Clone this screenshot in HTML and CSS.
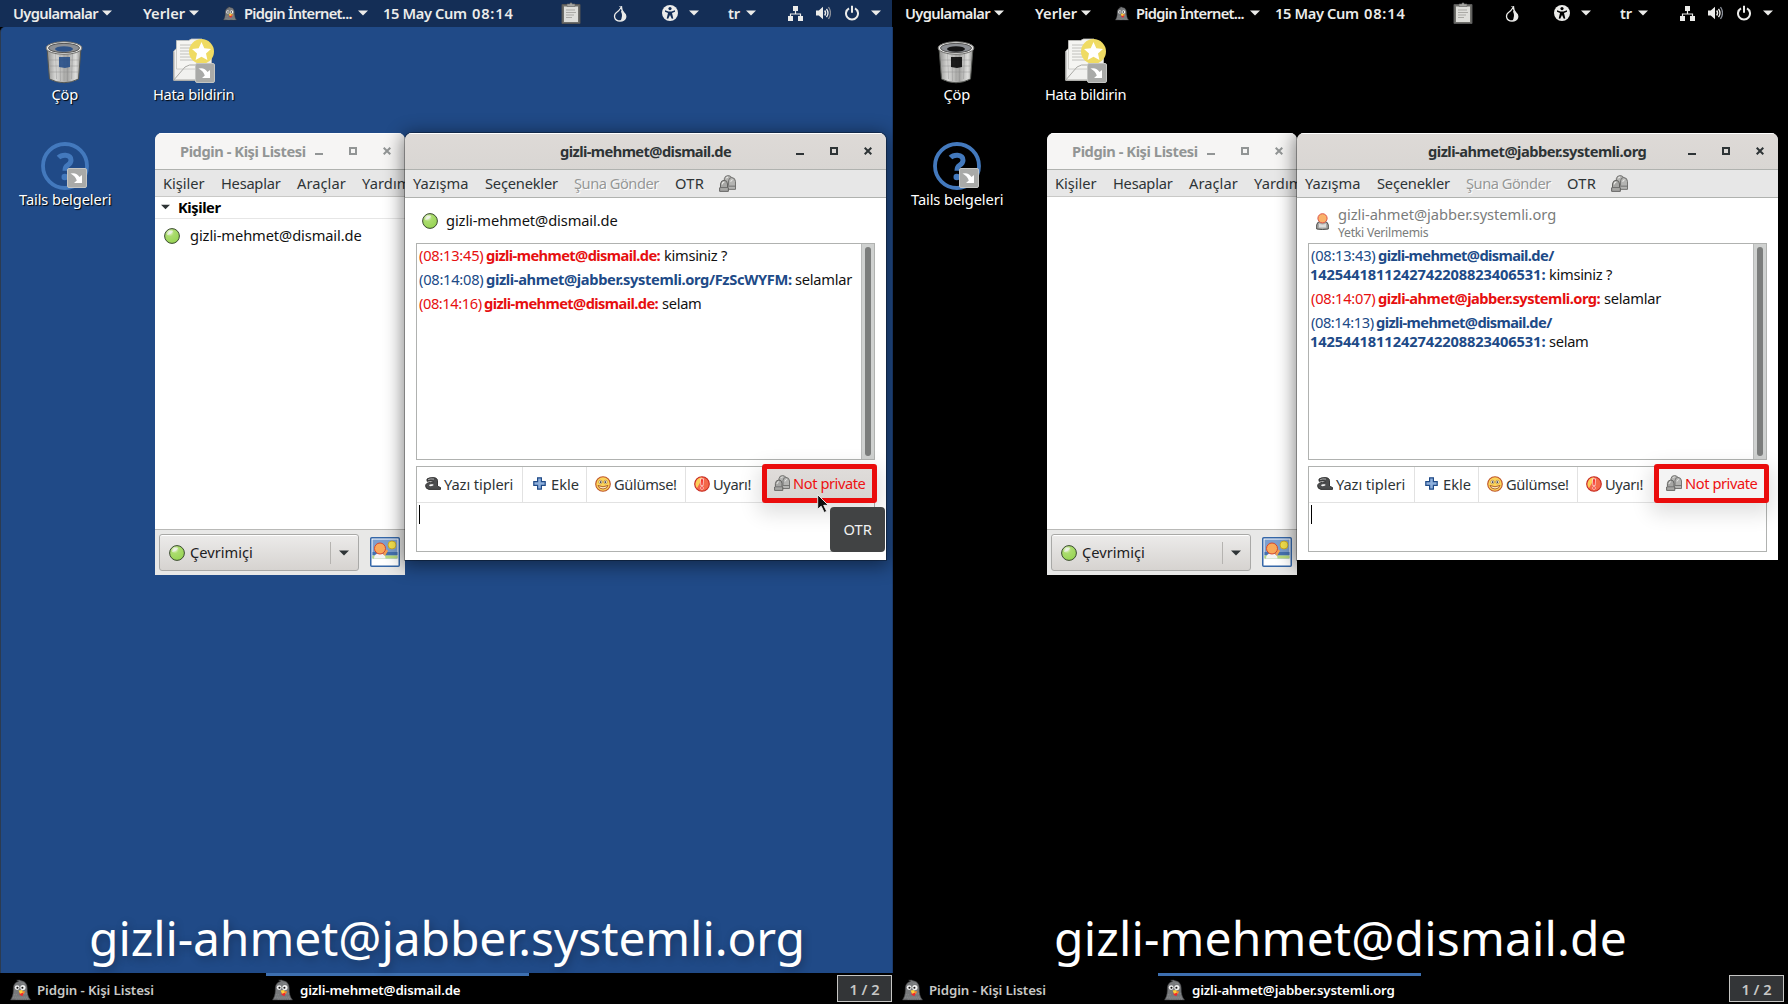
FILE: index.html
```html
<!DOCTYPE html>
<html lang="tr">
<head>
<meta charset="utf-8">
<title>Pidgin OTR</title>
<link rel="stylesheet" href="styles.css">
</head>
<body>
<svg class="defs" width="0" height="0">
  <defs>
    <radialGradient id="ball" cx=".35" cy=".25" r=".8"><stop offset="0" stop-color="#f4fbe9"/><stop offset=".35" stop-color="#abdc6e"/><stop offset="1" stop-color="#96d452"/></radialGradient>
    <linearGradient id="steel"><stop offset="0" stop-color="#8e8e8c"/><stop offset=".25" stop-color="#d8d8d6"/><stop offset=".6" stop-color="#a5a5a3"/><stop offset=".85" stop-color="#dededc"/><stop offset="1" stop-color="#8a8a88"/></linearGradient>
    <symbol id="i-ball" viewBox="0 0 16 16"><circle cx="8" cy="8" r="7.4" fill="url(#ball)" stroke="#3c4a33" stroke-width="1"/><path d="M3 7a5 5 0 0 1 6-4Q8 6 3 7z" fill="#eee" opacity=".8"/></symbol>
    <symbol id="i-pidgin" viewBox="0 0 22 22"><path d="M9 2l-2-1.200L10 .6l2 .8c4 .6 6 3.600 6 7.600 0 5 .5 9 3.500 12.400H.6C3.500 17 3.500 13 3.500 9 3.500 5.500 5.500 2.500 9 2z" fill="#77797b" stroke="#3b3b3d" stroke-width=".6"/><path d="M4 16h4M15 15h3M3 18.500h15M12 4h4M6 20.500h13" stroke="#939597" stroke-width="1" stroke-dasharray="1 1"/><circle cx="7.500" cy="8.500" r="2.500" fill="#f2f2f2"/><circle cx="13.500" cy="8.500" r="2.700" fill="#f2f2f2"/><circle cx="7.800" cy="8.700" r="1.100" fill="#111"/><circle cx="13" cy="8.700" r="1.100" fill="#111"/><path d="M10 12l4.500 1.500-1.500 4-3-1.500z" fill="#f0282d"/><path d="M9 11.500l4-.5.5 3-3 1z" fill="#fbd23a"/><path d="M13 12l3 .5-2 3z" fill="#fb8a2a"/></symbol>
    <symbol id="i-down" viewBox="0 0 10 6"><path d="M0 .5h10L5 5.500z" fill="currentColor"/></symbol>
    <symbol id="i-otr" viewBox="0 0 16 16"><path d="M5 9V3.500Q5.500.6 8.500.6q2.500 0 3.300 1.700 3.600.3 3.700 3.700v7.500H8z" fill="#b4b4b2" stroke="#6b6b69" stroke-width=".9"/><path d="M.6 15.400v-3.400l.8-.6V8.500Q1.800 5 4.800 5 8 5 8 8.500v3l.8.5v3.400z" fill="#a6a6a4" stroke="#5d5d5b" stroke-width=".9"/><path d="M1 11.800h7.600M8.500 10.500h7M9 10V5.500Q9.300 2.500 11.800 2.300" fill="none" stroke="#666664" stroke-width=".8"/><path d="M3 9q.1-2.300 2-2.300M11 6.500q.3-2 2-2M6.800 3q.6-1 1.800-1" stroke="#e6e6e4" fill="none"/></symbol>
    <symbol id="i-font" viewBox="0 0 16 13"><path d="M2 4.300V2Q4 .6 8 .6q4.300 0 4.500 3v5.600l3 1.300v1.900H4Q.6 11.800.6 8.800q.2-3.200 5-3.400h3q0-1.700-3-1.500-2 .1-3.600.4z" fill="#4c4d4e" stroke="#2a2a2a" stroke-width=".9"/><path d="M8.300 7.200H5.800Q3.700 7.500 4.200 8.800q1 .9 4.100-.2z" fill="#f5f5f5"/><path d="M3.200 2.600Q5.500 1.500 9 2.100" stroke="#aaa" fill="none"/></symbol>
    <symbol id="i-plus" viewBox="0 0 13 13"><path d="M4.600.8h3.800v3.800h3.800v3.800H8.400v3.800H4.600V8.400H.8V4.600h3.800z" fill="#8fb0dc" stroke="#1f4a87" stroke-width="1.200"/></symbol>
    <symbol id="i-smile" viewBox="0 0 16 16"><circle cx="8" cy="8" r="7.300" fill="#fbd35a" stroke="#c0562a" stroke-width="1.100"/><circle cx="5.500" cy="6" r="1.700" fill="#fff" stroke="#8a5a1a" stroke-width=".5"/><circle cx="10.500" cy="6" r="1.700" fill="#fff" stroke="#8a5a1a" stroke-width=".5"/><path d="M5.700 5.200v1.800M10.300 5.200v1.800" stroke="#222" stroke-width="1"/><path d="M3 9.500q5 2.500 10 0-1 3.500-5 3.500t-5-3.500z" fill="#fff0c0" stroke="#a0451c" stroke-width=".8"/></symbol>
    <symbol id="i-warn" viewBox="0 0 16 16"><circle cx="8" cy="8" r="7.300" fill="#f4694a" stroke="#c62a22" stroke-width="1.100"/><path d="M8 1.500A6.500 6.500 0 0 0 3 12Q6 8 8 1.500z" fill="#fbcf5a"/><path d="M6.500 2.800h3L9 9.800H7z" fill="#f5251d" stroke="#fff" stroke-width=".7"/><circle cx="8" cy="12" r="1.400" fill="#f5251d" stroke="#fff" stroke-width=".6"/></symbol>
    <symbol id="i-person" viewBox="0 0 13 17"><path d="M.7 16V12Q.9 9 4 8.500h5q3 .5 3.300 3.500v4q-6 1-11.600 0z" fill="#a9a9a7" stroke="#4a4a48"/><path d="M3 10.500q3.500 2 7 0v4H3z" fill="#dcdcda"/><circle cx="6.500" cy="5.300" r="4.600" fill="#f9b26a" stroke="#de5548"/></symbol>
    <symbol id="i-trash" viewBox="0 0 38 44"><path d="M2 8l2.500 31Q19 46.500 33.500 39L36 8z" fill="url(#steel)" stroke="#555753"/><path d="M10.500 14l1 25M15 15l.5 26M19 15v26M23 15l-.5 26M27.500 14l-1 25M4 20h30M4.500 26h29M5 32h28" stroke="#888" stroke-width=".4"/><path class="glass" d="M14 17h11v10l-5 1-6-1z"/><ellipse cx="19" cy="8" rx="18" ry="6.300" fill="#e9e9e7" stroke="#6b6b69"/><ellipse cx="19" cy="8" rx="15.500" ry="4.600" fill="#8d9095" stroke="#555"/><ellipse class="glass" cx="19" cy="9" rx="9" ry="2.800"/></symbol>
    <symbol id="i-link" viewBox="0 0 20 20"><rect x=".5" y=".5" width="19" height="19" rx="1.500" fill="#a9aaa8" stroke="#c4c5c3"/><path d="M3.500 5.500q6-1.500 9 3.500l2.500-2V15H7l2.800-2.500Q8.500 8 3.500 5.500z" fill="#fff"/></symbol>
    <symbol id="i-mail" viewBox="0 0 43 45"><path d="M.8 13L5 9h30l3.500 4v29.500H.8z" fill="#f1f1ef" stroke="#b5b5b1"/><path d="M3.500 31V2.500h12l3-1.500H29v30z" fill="#f5f5f2" stroke="#c4c4c0" stroke-width=".8"/><path d="M7 7h12M7 10h10M7 13h10M7 16h10M7 19h12M7 22h15" stroke="#c0c0bc"/><path d="M.8 42L12 29q4-3 10-2l4 2M.8 14v28h25" fill="none" stroke="#a9a9a5"/><circle cx="28.500" cy="13.500" r="12.500" fill="#efdb63"/><path d="M28.500 4l2.800 6.200 6.700.7-5 4.600 1.400 6.600-5.900-3.400-5.900 3.400 1.400-6.600-5-4.600 6.700-.7z" fill="#fff"/></symbol>
    <symbol id="i-help" viewBox="0 0 48 48"><circle cx="24" cy="24" r="22" fill="none" stroke="#4379bd" stroke-width="3.800"/><path d="M17.500 15.500q2.500-2.500 7-2.300 5.500.4 5.500 5 0 3-3.500 5.200-2.500 1.600-2.500 5.300" fill="none" stroke="#4379bd" stroke-width="5"/><circle cx="23.800" cy="35" r="3.300" fill="#4379bd"/></symbol>
    <symbol id="i-clip" viewBox="0 0 20 22"><path d="M1 2.500h18v19H1z" fill="#6f6f6b" stroke="#555"/><path d="M3 4.500h14v15.500H3z" fill="#dededa"/><path d="M6 4.500V2h2.500Q10-.5 11.500 2H14v2.500z" fill="#a5a5a1" stroke="#666" stroke-width=".6"/><path d="M5 8h9M5 10.500h10M5 13h8M5 15.500h6" stroke="#aaa9a5"/></symbol>
    <symbol id="i-onion" viewBox="0 0 14 16"><path d="M8.500 1Q6 5 3.200 6.800C.5 9 .8 15 7 15s7-5.500 4-8Q8.500 5 8.500 1z" fill="none" stroke="currentColor" stroke-width="1.300"/><path d="M8 5.500Q10.300 10 7.300 15c6 0 6.500-5.500 3.700-8Q9 5.500 8 4.500z" fill="currentColor"/><path d="M6.500.5l2.500 1" stroke="currentColor"/></symbol>
    <symbol id="i-access" viewBox="0 0 16 16"><circle cx="8" cy="8" r="8" fill="currentColor"/><g class="cut"><circle cx="8" cy="3.600" r="1.600"/><path d="M3 5.300l3.500 1.200h3L13 5.300v1.500L10 8l1.300 5.500-1.500.3L8 10l-1.800 3.800-1.500-.3L6 8 3 6.800z"/></g></symbol>
    <symbol id="i-net" viewBox="0 0 15 15"><path d="M5 0h5v5H5zM0 10h5v5H0zM10 10h5v5h-5z" fill="currentColor"/><path d="M7.500 5v3M2.500 11V8h10v3" fill="none" stroke="currentColor" stroke-width="1.200"/></symbol>
    <symbol id="i-vol" viewBox="0 0 15 14"><path d="M0 4.500h2.800L7 .8v12.400L2.800 9.500H0z" fill="currentColor"/><path d="M8.700 4.500q1.800 2.500 0 5M10.500 2.800q3 4.200 0 8.400" fill="none" stroke="currentColor" stroke-width="1.400"/><path d="M12.500 1q4 6 0 12" fill="none" stroke="#8a8f99" stroke-width="1.300"/></symbol>
    <symbol id="i-power" viewBox="0 0 14 16"><path d="M4 3.300a6 6 0 1 0 6 0" fill="none" stroke="currentColor" stroke-width="2"/><path d="M7 .8v7" stroke="currentColor" stroke-width="2"/></symbol>
    <symbol id="i-min" viewBox="0 0 8 8"><path d="M0 6h8v2H0z" fill="currentColor"/></symbol>
    <symbol id="i-max" viewBox="0 0 8 8"><path d="M1 1h6v6H1z" fill="none" stroke="currentColor" stroke-width="2"/></symbol>
    <symbol id="i-close" viewBox="0 0 8 8"><path d="M.7.7l6.600 6.600M7.300.7L.7 7.300" stroke="currentColor" stroke-width="2"/></symbol>
    <symbol id="i-avatar" viewBox="0 0 30 30"><rect x=".75" y=".75" width="28.500" height="28.500" rx="1" fill="#fff" stroke="#3567a8" stroke-width="1.500"/><path d="M2.500 2.500h25v19h-25z" fill="#7c9fcf"/><path d="M2.500 15h25v3h-25z" fill="#4572b0"/><path d="M2.500 18.500h25v3h-25z" fill="#b9dc7c"/><circle cx="22" cy="8" r="4" fill="#f3e04c" stroke="#c9a92c"/><path d="M4 21.500q0-5 5.500-5.500 6 .5 6 5.500z" fill="#f4f4f4"/><path d="M14 18l3-5" stroke="#f7a050" stroke-width="2.500"/><circle cx="10" cy="11.500" r="5.500" fill="#f9a95a" stroke="#d9482f"/></symbol>
    <symbol id="i-cursor" viewBox="0 0 14 20"><path d="M.7.7v14.500l3.500-3 3 6.300 2.500-1.200-3-6h4.600z" fill="#0c0c0c" stroke="#f4f4f4" stroke-width=".9"/></symbol>
  </defs>
</svg>

<section class="desktop blue">
  <header class="topbar">
    <span class="t uyg">Uygulamalar</span><svg class="down"><use href="#i-down"/></svg>
    <span class="t yer">Yerler</span><svg class="down"><use href="#i-down"/></svg>
    <svg class="bird"><use href="#i-pidgin"/></svg><span class="t app">Pidgin İnternet...</span><svg class="down"><use href="#i-down"/></svg>
    <span class="t date">15 May Cum</span><span class="t time">08:14</span>
    <svg class="clip"><use href="#i-clip"/></svg><svg class="onion"><use href="#i-onion"/></svg>
    <svg class="access"><use href="#i-access"/></svg><svg class="down d-acc"><use href="#i-down"/></svg>
    <span class="t lang">tr</span><svg class="down"><use href="#i-down"/></svg>
    <svg class="net"><use href="#i-net"/></svg><svg class="vol"><use href="#i-vol"/></svg><svg class="power"><use href="#i-power"/></svg><svg class="down d-pow"><use href="#i-down"/></svg>
  </header>
  <main class="space">
    <div class="launcher trash"><svg><use href="#i-trash"/></svg><span class="t cop">Çöp</span></div>
    <div class="launcher report"><svg><use href="#i-mail"/></svg><svg class="link"><use href="#i-link"/></svg><span class="t hata">Hata bildirin</span></div>
    <div class="launcher docs"><svg><use href="#i-help"/></svg><svg class="link"><use href="#i-link"/></svg><span class="t tails">Tails belgeleri</span></div>

    <article class="window buddies">
      <div class="titlebar"><span class="t b-title">Pidgin - Kişi Listesi</span><svg><use href="#i-min"/></svg><svg><use href="#i-max"/></svg><svg><use href="#i-close"/></svg></div>
      <nav class="menubar"><span class="t m-kis">Kişiler</span><span class="t m-hes">Hesaplar</span><span class="t m-ara">Araçlar</span><span class="t m-yar">Yardım</span></nav>
      <div class="list">
        <div class="group"><svg class="down"><use href="#i-down"/></svg><span class="t g-kis">Kişiler</span></div>
        <div class="buddy"><svg class="ball"><use href="#i-ball"/></svg><span class="t who">gizli-mehmet@dismail.de</span></div>
      </div>
      <footer class="status"><div class="combo"><svg class="ball"><use href="#i-ball"/></svg><span class="t cev">Çevrimiçi</span><i></i><svg class="down"><use href="#i-down"/></svg></div><svg class="avatar"><use href="#i-avatar"/></svg></footer>
    </article>

    <article class="window chat">
      <div class="titlebar"><span class="t c-meh">gizli-mehmet@dismail.de</span><svg><use href="#i-min"/></svg><svg><use href="#i-max"/></svg><svg><use href="#i-close"/></svg></div>
      <nav class="menubar"><span class="t m-yaz">Yazışma</span><span class="t m-sec">Seçenekler</span><span class="t m-sun">Şuna Gönder</span><span class="t m-otr">OTR</span><svg class="otr"><use href="#i-otr"/></svg></nav>
      <div class="contact"><svg class="ball"><use href="#i-ball"/></svg><span class="t who">gizli-mehmet@dismail.de</span></div>
      <div class="log">
        <div class="lines">
          <p class="red"><span class="t ts">(08:13:45)</span><b class="t n-meh">gizli-mehmet@dismail.de:</b><span class="t x-kim">kimsiniz ?</span></p>
          <p class="navy"><span class="t ts">(08:14:08)</span><b class="t n-ahf">gizli-ahmet@jabber.systemli.org/FzScWYFM:</b><span class="t x-lar">selamlar</span></p>
          <p class="red"><span class="t ts2">(08:14:16)</span><b class="t n-meh">gizli-mehmet@dismail.de:</b><span class="t x-sel">selam</span></p>
        </div>
        <div class="scroll"><i></i></div>
      </div>
      <div class="editor">
        <div class="tools">
          <span class="tool k1"><svg class="font"><use href="#i-font"/></svg><span class="t yt">Yazı tipleri</span></span>
          <span class="tool k2"><svg class="plus"><use href="#i-plus"/></svg><span class="t ek">Ekle</span></span>
          <span class="tool k3"><svg><use href="#i-smile"/></svg><span class="t gu">Gülümse!</span></span>
          <span class="tool k4"><svg><use href="#i-warn"/></svg><span class="t uy">Uyarı!</span></span>
          <span class="tool private hover"><svg><use href="#i-otr"/></svg><span class="t np">Not private</span></span>
        </div>
        <div class="input"><i class="caret"></i></div>
      </div>
    </article>
    <div class="tooltip"><span class="t tip">OTR</span></div>
    <svg class="cursor"><use href="#i-cursor"/></svg>
    <div class="caption"><span class="t cap-a">gizli-ahmet@jabber.systemli.org</span></div>
  </main>
  <footer class="taskbar">
    <div class="task"><svg><use href="#i-pidgin"/></svg><span class="t k-pid">Pidgin - Kişi Listesi</span></div>
    <div class="task active"><svg><use href="#i-pidgin"/></svg><span class="t k-meh">gizli-mehmet@dismail.de</span></div>
    <div class="pager"><span>1 / 2</span></div>
  </footer>
</section>

<section class="desktop black">
  <header class="topbar">
    <span class="t uyg">Uygulamalar</span><svg class="down"><use href="#i-down"/></svg>
    <span class="t yer">Yerler</span><svg class="down"><use href="#i-down"/></svg>
    <svg class="bird"><use href="#i-pidgin"/></svg><span class="t app">Pidgin İnternet...</span><svg class="down"><use href="#i-down"/></svg>
    <span class="t date">15 May Cum</span><span class="t time">08:14</span>
    <svg class="clip"><use href="#i-clip"/></svg><svg class="onion"><use href="#i-onion"/></svg>
    <svg class="access"><use href="#i-access"/></svg><svg class="down d-acc"><use href="#i-down"/></svg>
    <span class="t lang">tr</span><svg class="down"><use href="#i-down"/></svg>
    <svg class="net"><use href="#i-net"/></svg><svg class="vol"><use href="#i-vol"/></svg><svg class="power"><use href="#i-power"/></svg><svg class="down d-pow"><use href="#i-down"/></svg>
  </header>
  <main class="space">
    <div class="launcher trash"><svg><use href="#i-trash"/></svg><span class="t cop">Çöp</span></div>
    <div class="launcher report"><svg><use href="#i-mail"/></svg><svg class="link"><use href="#i-link"/></svg><span class="t hata">Hata bildirin</span></div>
    <div class="launcher docs"><svg><use href="#i-help"/></svg><svg class="link"><use href="#i-link"/></svg><span class="t tails">Tails belgeleri</span></div>

    <article class="window buddies">
      <div class="titlebar"><span class="t b-title">Pidgin - Kişi Listesi</span><svg><use href="#i-min"/></svg><svg><use href="#i-max"/></svg><svg><use href="#i-close"/></svg></div>
      <nav class="menubar"><span class="t m-kis">Kişiler</span><span class="t m-hes">Hesaplar</span><span class="t m-ara">Araçlar</span><span class="t m-yar">Yardım</span></nav>
      <div class="list"></div>
      <footer class="status"><div class="combo"><svg class="ball"><use href="#i-ball"/></svg><span class="t cev">Çevrimiçi</span><i></i><svg class="down"><use href="#i-down"/></svg></div><svg class="avatar"><use href="#i-avatar"/></svg></footer>
    </article>

    <article class="window chat">
      <div class="titlebar"><span class="t c-ahm">gizli-ahmet@jabber.systemli.org</span><svg><use href="#i-min"/></svg><svg><use href="#i-max"/></svg><svg><use href="#i-close"/></svg></div>
      <nav class="menubar"><span class="t m-yaz">Yazışma</span><span class="t m-sec">Seçenekler</span><span class="t m-sun">Şuna Gönder</span><span class="t m-otr">OTR</span><svg class="otr"><use href="#i-otr"/></svg></nav>
      <div class="contact unauth"><svg class="person"><use href="#i-person"/></svg><div><span class="t w-ahm">gizli-ahmet@jabber.systemli.org</span><span class="t w-yet">Yetki Verilmemis</span></div></div>
      <div class="log">
        <div class="lines">
          <p class="navy"><span class="t ts">(08:13:43)</span><b class="t n-mes">gizli-mehmet@dismail.de/</b></p>
          <p class="navy cont"><b class="t n-num">1425441811242742208823406531:</b><span class="t x-kim">kimsiniz ?</span></p>
          <p class="red"><span class="t ts">(08:14:07)</span><b class="t n-ahm">gizli-ahmet@jabber.systemli.org:</b><span class="t x-lar">selamlar</span></p>
          <p class="navy"><span class="t ts2">(08:14:13)</span><b class="t n-mes">gizli-mehmet@dismail.de/</b></p>
          <p class="navy cont"><b class="t n-num">1425441811242742208823406531:</b><span class="t x-sel">selam</span></p>
        </div>
        <div class="scroll"><i></i></div>
      </div>
      <div class="editor">
        <div class="tools">
          <span class="tool k1"><svg class="font"><use href="#i-font"/></svg><span class="t yt">Yazı tipleri</span></span>
          <span class="tool k2"><svg class="plus"><use href="#i-plus"/></svg><span class="t ek">Ekle</span></span>
          <span class="tool k3"><svg><use href="#i-smile"/></svg><span class="t gu">Gülümse!</span></span>
          <span class="tool k4"><svg><use href="#i-warn"/></svg><span class="t uy">Uyarı!</span></span>
          <span class="tool private"><svg><use href="#i-otr"/></svg><span class="t np">Not private</span></span>
        </div>
        <div class="input"><i class="caret"></i></div>
      </div>
    </article>
    <div class="caption"><span class="t cap-m">gizli-mehmet@dismail.de</span></div>
  </main>
  <footer class="taskbar">
    <div class="task"><svg><use href="#i-pidgin"/></svg><span class="t k-pid">Pidgin - Kişi Listesi</span></div>
    <div class="task active"><svg><use href="#i-pidgin"/></svg><span class="t k-ahm">gizli-ahmet@jabber.systemli.org</span></div>
    <div class="pager"><span>1 / 2</span></div>
  </footer>
</section>
</body>
</html>
```

FILE: styles.css
```css
* { box-sizing: border-box; }
body { margin: 0; width: 1788px; height: 1004px; overflow: hidden; display: flex; background: #000; font: 14.67px/20px "Noto Sans", "Open Sans", sans-serif; color: #2e3436; }
.defs { position: absolute; }
svg { display: block; flex: none; }
p { margin: 0; }
.t { display: block; flex: none; white-space: nowrap; padding-left: 1px; }

.desktop { flex: none; width: 892px; height: 1004px; display: flex; flex-direction: column; }
.desktop.black { width: 896px; }
.blue { --desk: #204a87; --bar: #142e56; position: relative; z-index: 1; }
.black { --desk: #000; --bar: #000; }

/* top bar */
.topbar { height: 27px; flex: none; display: flex; align-items: center; background: var(--bar); color: #ececea; font-weight: 600; padding-left: 12px; }
.topbar .t { padding-bottom: 2px; }
.down { width: 10px; height: 6px; }
.topbar .down { margin-bottom: 1px; }
.uyg { width: 86px; margin-right: 4px; letter-spacing: -.64px; }
.yer { width: 43px; margin: 0 4px 0 30px; letter-spacing: .02px; }
.bird { width: 14px; height: 15px; margin: 0 6px 0 24px; }
.app { width: 109px; margin-right: 6px; letter-spacing: -.7px; }
.date { width: 84px; margin-left: 14px; letter-spacing: -.37px; }
.time { width: 42px; margin-left: 5px; letter-spacing: .8px; }
.clip { width: 20px; height: 22px; margin: 0 32px 2px 48px; }
.onion { width: 14px; height: 16px; }
.access { width: 16px; height: 16px; margin-left: 35px; margin-bottom: 1px; }
.cut { fill: var(--bar); }
.d-acc { margin-left: 11px; }
.lang { width: 12px; margin: 0 7px 0 28px; letter-spacing: -.2px; }
.net { width: 15px; height: 15px; margin-left: 32px; }
.vol { width: 15px; height: 14px; margin-left: 13px; margin-bottom: 1px; }
.power { width: 14px; height: 16px; margin-left: 14px; margin-bottom: 1px; }
.d-pow { margin-left: 12px; }

/* desktop surface */
.space { flex: 1; position: relative; background: var(--desk); }
.blue .space { border-left: 1px solid #2c3b50; border-radius: 5px 0 0 0; box-shadow: 1px 0 #1b3b6d; }
.blue .space > * { margin-left: -1px; }
.glass { fill: var(--desk); opacity: .85; }
.launcher { position: absolute; display: flex; flex-direction: column; align-items: center; color: #fff; text-shadow: 1px 1px 1px #000; }
.launcher .link { position: absolute; width: 20px; height: 20px; }
.trash { left: 45px; top: 13px; }
.trash svg { width: 38px; height: 44px; }
.report { left: 152px; top: 11px; }
.report svg { width: 43px; height: 45px; margin: 0 0 1px 1px; }
.report .link { left: 43px; top: 25px; margin: 0; }
.docs { left: 18px; top: 115px; }
.docs svg { width: 48px; height: 48px; margin-bottom: -1px; }
.docs .link { left: 49px; top: 26px; }
.cop { width: 27px; letter-spacing: -.2px; }
.hata { width: 83px; letter-spacing: -.25px; }
.tails { width: 94px; letter-spacing: -.1px; }
.launcher .t { line-height: 20px; }

/* windows */
.window { position: absolute; top: 106px; display: flex; flex-direction: column; background: #fff; border-radius: 7px 7px 0 0; overflow: hidden; }
.buddies { left: 155px; width: 250px; height: 442px; }
.chat { left: 405px; width: 481px; height: 427px; box-shadow: 0 0 0 1px rgba(0,0,0,.3), 0 3px 18px 3px rgba(0,0,0,.45); }
.titlebar { height: 37px; flex: none; display: flex; align-items: center; border-bottom: 1px solid #b0b2af; box-shadow: inset 0 1px #fff; background: #f6f5f4; color: #929595; font-weight: 700; }
.chat .titlebar { background: linear-gradient(#dedad7, #d9d6d3); color: #2e3436; }
.titlebar svg { width: 8px; height: 8px; margin-right: 26px; }
.b-title { width: 127px; margin-left: 24px; margin-right: 9px; letter-spacing: -.43px; }
.c-meh { width: 173px; margin-left: 154px; margin-right: 64px; letter-spacing: -.58px; }
.c-ahm { width: 220px; margin-left: 130px; margin-right: 41px; letter-spacing: -.51px; }
.menubar { height: 27px; flex: none; display: flex; align-items: center; background: #e7e7e7; border-bottom: 1px solid #c9c9c7; overflow: hidden; }
.chat .menubar { border-color: #b0b2af; height: 28px; }
.chat .menubar .t { padding-bottom: 2px; }
.m-kis { width: 42px; margin-left: 7px; letter-spacing: -.05px; }
.m-hes { width: 60px; margin-left: 16px; letter-spacing: -.25px; }
.m-ara { width: 50px; margin-left: 16px; letter-spacing: .05px; }
.m-yar { width: 50px; margin-left: 15px; letter-spacing: .1px; }
.m-yaz { width: 56px; margin-left: 7px; letter-spacing: 0; }
.m-sec { width: 74px; margin-left: 16px; letter-spacing: -.2px; }
.m-sun { width: 86px; margin-left: 15px; letter-spacing: -.48px; color: #959796; text-shadow: 1px 1px #fff; }
.m-otr { width: 30px; margin-left: 15px; letter-spacing: .3px; }
.otr { width: 17px; height: 17px; margin: 0 0 1px 15px; }

/* buddy list */
.list { flex: 1; }
.group { height: 22px; display: flex; align-items: center; gap: 7px; padding: 0 0 1px 6px; border-bottom: 1px solid #e6e6e6; color: #000; font-weight: 700; }
.group .down { width: 9px; color: #2e3436; }
.g-kis { width: 43px; letter-spacing: -.42px; }
.buddy { height: 35px; display: flex; align-items: center; gap: 9px; padding-left: 9px; color: #111; }
.buddy .t { padding-bottom: 3px; }
.buddy .ball { margin-bottom: 1px; }
.ball { width: 16px; height: 16px; }
.who { width: 173px; letter-spacing: -.1px; }
.status { height: 46px; flex: none; display: flex; align-items: flex-start; gap: 11px; padding: 4px 4px; background: #e8e8e7; border-top: 1px solid #b9b9b7; }
.combo { width: 200px; height: 37px; flex: none; display: flex; align-items: center; padding-left: 9px; border: 1px solid #a9a9a7; border-radius: 3px; background: linear-gradient(#ecebea, #d6d3d0); box-shadow: inset 0 1px #fff; }
.cev { width: 64px; margin-left: 4px; letter-spacing: 0; padding-bottom: 2px; color: #1d2022; }
.combo i { width: 1px; height: 22px; margin: 0 8px 0 77px; background: #b5b3b0; }
.avatar { width: 30px; height: 30px; margin-top: 3px; }

/* conversation */
.contact { height: 45px; flex: none; display: flex; align-items: center; gap: 7px; padding: 1px 0 0 17px; color: #111; }
.contact .who { padding-bottom: 2px; }
.unauth { gap: 8px; padding-left: 19px; padding-top: 5px; color: #7a7c7b; }
.person { width: 13px; height: 17px; margin-bottom: 4px; }
.w-ahm { width: 220px; line-height: 19px; letter-spacing: -.05px; }
.w-yet { width: 91px; font-size: 12.200px; line-height: 17px; letter-spacing: -.25px; }
.log { height: 217px; flex: none; margin: 0 11px 0 11px; display: flex; border: 1px solid #b0b2b0; }
.lines { flex: 1; padding: 0 0 0 1px; color: #111; }
.lines p { display: flex; gap: 1px; height: 19px; line-height: 19px; margin-top: 5px; }
.lines p:first-child { margin-top: 2px; }
.lines p.cont { margin-top: 0; margin-left: -1px; }
.lines .t:last-child:not(b) { margin-left: 2px; }
.red .ts, .red .ts2, .red b { color: #e60f0f; }
.navy .ts, .navy .ts2, .navy b { color: #204a87; }
.ts { width: 66px; letter-spacing: -.25px; }
.ts2 { width: 64px; letter-spacing: -.43px; }
.n-meh { width: 175px; letter-spacing: -.6px; }
.n-mes { width: 177px; letter-spacing: -.62px; }
.n-ahf { width: 306px; letter-spacing: -.36px; }
.n-ahm { width: 223px; letter-spacing: -.5px; }
.n-num { width: 236px; letter-spacing: -.12px; }
.x-kim { width: 64px; letter-spacing: -.3px; }
.x-lar { width: 58px; letter-spacing: -.25px; }
.x-sel { width: 40px; letter-spacing: -.3px; }
.scroll { width: 13px; flex: none; padding: 3px 3px; background: #cfd1d0; border-left: 1px solid #b9bbba; display: flex; }
.scroll i { width: 6px; border-radius: 3px; background: #7b7d7c; }
.editor { height: 86px; flex: none; margin: 6px 11px 0 11px; border: 1px solid #b0b2b0; display: flex; flex-direction: column; }
.tools { height: 36px; flex: none; display: flex; border-bottom: 1px solid #e2e2e2; }
.tool { display: flex; align-items: center; flex: none; border-right: 1px solid #e2e2e2; }
.tool .t { padding-bottom: 1px; }
.tool svg { width: 16px; height: 16px; margin: 0 2px 1px 0; }
.tool .font { height: 13px; }
.tool .plus { width: 13px; height: 13px; margin-right: 4px; }
.k1 { width: 106px; padding: 0 0 1px 8px; }
.k2 { width: 64px; padding: 0 0 1px 10px; }
.k3 { width: 99px; padding: 0 0 1px 8px; }
.k4 { width: 76px; padding: 0 0 1px 8px; border-right: 0; }
.private { position: relative; width: 115px; height: 39px; margin: -3px -2px 0 0; padding-left: 7px; border: 5px solid #ea0c0c; border-radius: 3px; color: #ee1111; background: #f4f4f4; box-shadow: 0 7px 20px 4px rgba(0,0,0,.12); }
.private.hover { background: linear-gradient(#dfdcda, #d8d5d2); }
.yt { width: 71px; letter-spacing: -.08px; }
.ek { width: 29px; letter-spacing: 0; }
.gu { width: 64px; letter-spacing: -.35px; }
.uy { width: 39px; letter-spacing: -.35px; }
.np { width: 73px; letter-spacing: -.43px; }
.input { flex: 1; padding: 2px; }
.caret { display: block; width: 1px; height: 19px; background: #000; }
.tooltip { position: absolute; left: 830px; top: 480px; width: 55px; height: 45px; border-radius: 4px; background: #414344; color: #f2f2f2; display: flex; align-items: center; justify-content: center; padding: 0 1px 2px 0; }
.tip { width: 29px; letter-spacing: .1px; }
.cursor { position: absolute; left: 817px; top: 467px; width: 14px; height: 20px; }

.caption { position: absolute; top: 881px; left: 0; width: 892px; line-height: 60px; font-size: 48px; color: #fff; text-shadow: 2px 3px 8px rgba(0,0,0,.3); }
.cap-a { width: 716px; margin-left: 88px; letter-spacing: -.111px; }
.cap-m { width: 573px; margin-left: 161px; letter-spacing: .145px; }

/* bottom bar */
.taskbar { height: 31px; flex: none; display: flex; align-items: center; padding: 0 0 0 8px; background: #000; color: #c8c8c6; font-weight: 600; font-size: 13.300px; }
.task { width: 258px; height: 31px; display: flex; align-items: center; gap: 5px; padding: 3px 0 0 2px; }
.task svg { width: 21px; height: 22px; }
.task.active { width: 263px; padding-left: 6px; gap: 6px; color: #fff; border-top: 3px solid #3d6fb0; border-bottom: 3px solid transparent; }
.k-pid { width: 118px; letter-spacing: -.11px; }
.k-meh { width: 162px; letter-spacing: -.14px; }
.k-ahm { width: 204px; letter-spacing: -.15px; }
.pager { width: 55px; height: 27px; margin-left: 308px; border: 1px solid #c6c6c4; background: #333537; display: flex; align-items: center; justify-content: center; font-size: 14.670px; }
```
